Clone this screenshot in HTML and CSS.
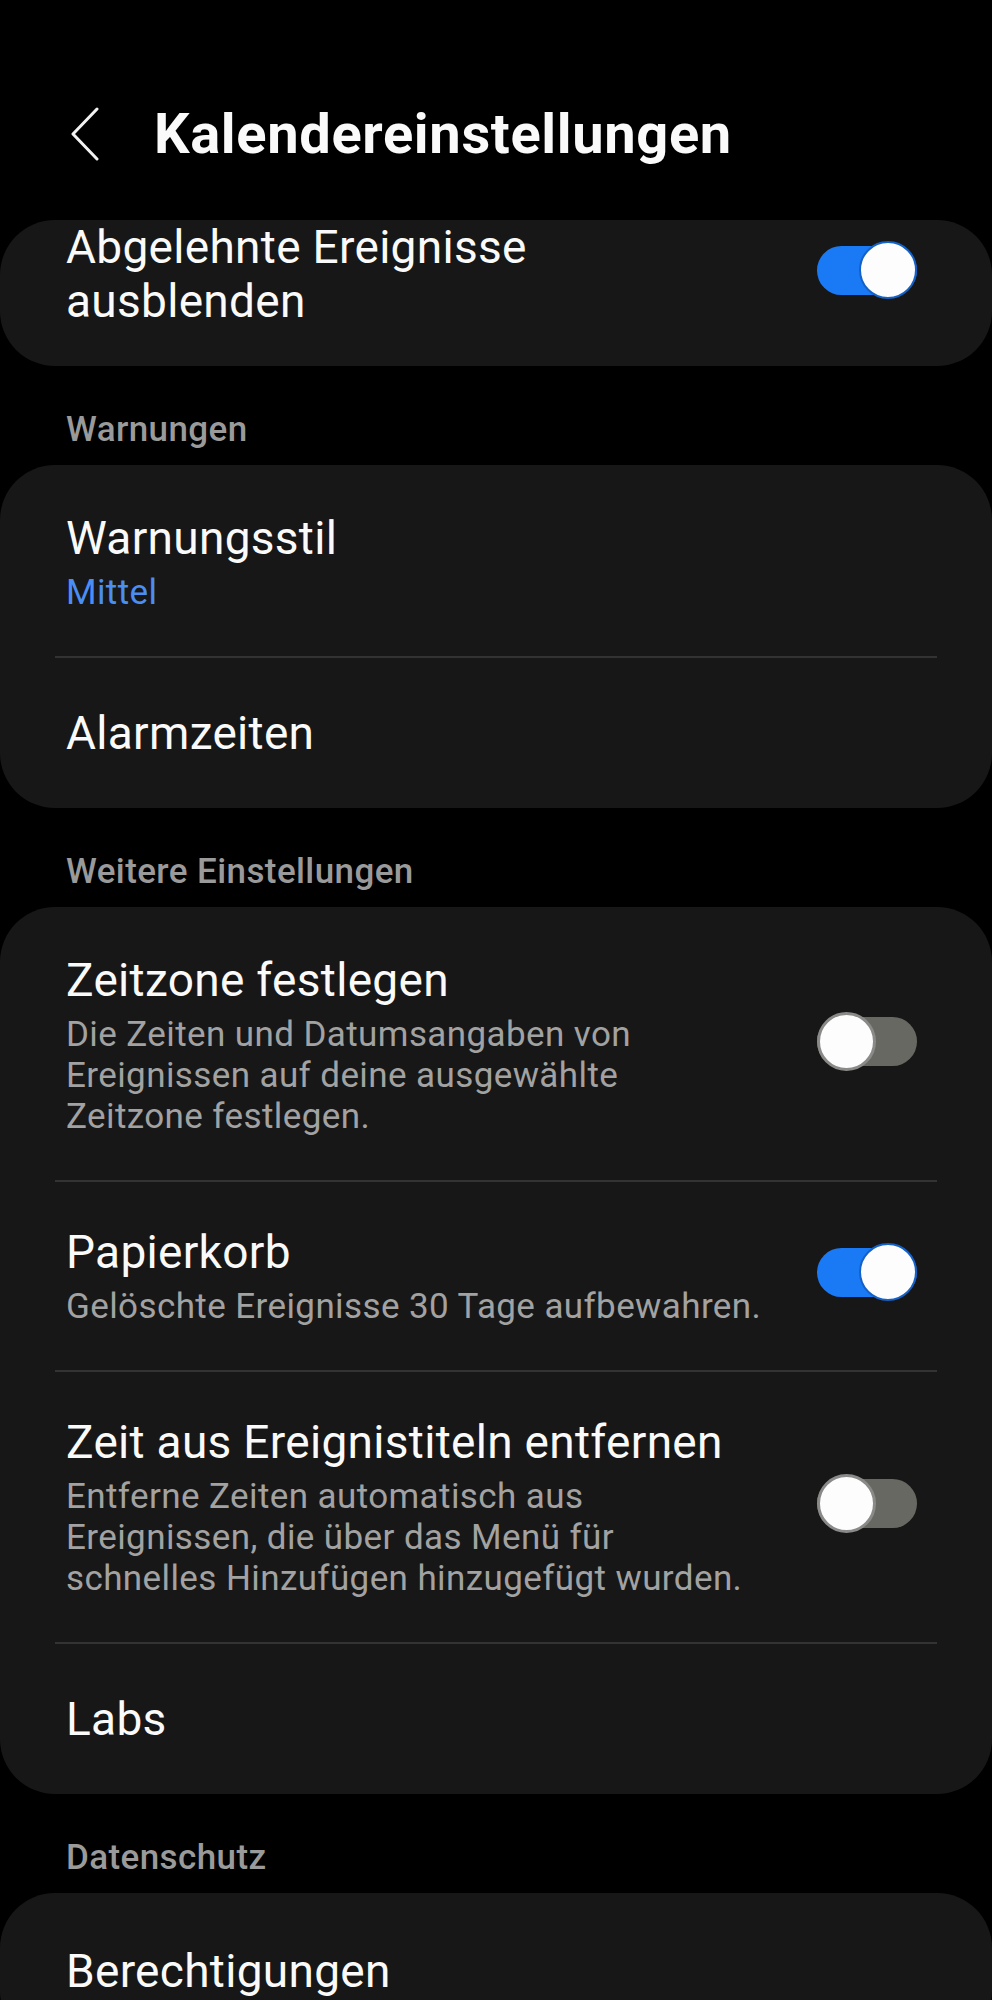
FILE: index.html
```html
<!DOCTYPE html>
<html lang="de">
<head>
<meta charset="utf-8">
<title>Kalendereinstellungen</title>
<link rel="stylesheet" href="styles.css">
</head>
<body>
<header class="appbar">
  <button class="back" aria-label="Zurück">
    <svg width="30" height="54" viewBox="0 0 30 54"><polyline points="27,2 3,27 27,52" fill="none" stroke="#f2f2f2" stroke-width="3" stroke-linecap="round" stroke-linejoin="round"/></svg>
  </button>
  <h1 class="title">Kalendereinstellungen</h1>
</header>

<main class="list">
  <section class="card card--scrolled">
    <div class="row row--clipped">
      <div class="text"><div class="label">Abgelehnte Ereignisse<br>ausblenden</div></div>
      <div class="switch switch--on"><span class="track"><span class="thumb"></span></span></div>
    </div>
  </section>

  <h2 class="section-title">Warnungen</h2>
  <section class="card">
    <div class="row">
      <div class="text"><div class="label">Warnungsstil</div><div class="sub sub--value">Mittel</div></div>
    </div>
    <div class="divider"></div>
    <div class="row">
      <div class="text"><div class="label">Alarmzeiten</div></div>
    </div>
  </section>

  <h2 class="section-title">Weitere Einstellungen</h2>
  <section class="card">
    <div class="row">
      <div class="text"><div class="label">Zeitzone festlegen</div><div class="sub">Die Zeiten und Datumsangaben von<br>Ereignissen auf deine ausgewählte<br>Zeitzone festlegen.</div></div>
      <div class="switch"><span class="track"><span class="thumb"></span></span></div>
    </div>
    <div class="divider"></div>
    <div class="row">
      <div class="text"><div class="label">Papierkorb</div><div class="sub">Gelöschte Ereignisse 30 Tage aufbewahren.</div></div>
      <div class="switch switch--on"><span class="track"><span class="thumb"></span></span></div>
    </div>
    <div class="divider"></div>
    <div class="row">
      <div class="text"><div class="label">Zeit aus Ereignistiteln entfernen</div><div class="sub">Entferne Zeiten automatisch aus<br>Ereignissen, die über das Menü für<br>schnelles Hinzufügen hinzugefügt wurden.</div></div>
      <div class="switch"><span class="track"><span class="thumb"></span></span></div>
    </div>
    <div class="divider"></div>
    <div class="row">
      <div class="text"><div class="label">Labs</div></div>
    </div>
  </section>

  <h2 class="section-title">Datenschutz</h2>
  <section class="card">
    <div class="row">
      <div class="text"><div class="label">Berechtigungen</div></div>
    </div>
  </section>
</main>
</body>
</html>
```

FILE: styles.css
```css
* {
  box-sizing: border-box;
  margin: 0;
  padding: 0;
}

html, body {
  background: #000;
}

body {
  width: 992px;
  font-family: Roboto, "Liberation Sans", sans-serif;
  color: #fafafa;
}

.appbar {
  display: flex;
  align-items: center;
  height: 220px;
  padding: 89px 0 41px 70px;
  gap: 54px;
}

.back {
  display: flex;
  width: 30px;
  height: 54px;
  background: none;
  border: 0;
}

.title {
  font-size: 56px;
  font-weight: 700;
  line-height: 90px;
  letter-spacing: 0.65px;
  color: #fafafa;
  white-space: nowrap;
}

.card {
  background: #171717;
  border-radius: 55px;
  padding-top: 3px;
  overflow: hidden;
}

.card--scrolled {
  padding-top: 0;
}

.row {
  display: flex;
  align-items: center;
  gap: 40px;
  min-height: 150px;
  padding: 43px 75px 43px 66px;
}

.row--clipped {
  min-height: 0;
  padding-top: 0;
  padding-bottom: 38px;
}

.text {
  flex: 1;
  min-width: 0;
}

.label {
  font-size: 46px;
  line-height: 54px;
  letter-spacing: 0.3px;
  color: #fafafa;
  white-space: nowrap;
}

.sub {
  margin-top: 7px;
  font-size: 35px;
  line-height: 41px;
  letter-spacing: 0.4px;
  color: #a2a2a2;
  white-space: nowrap;
}

.sub--value {
  color: #4b8ef3;
}

.divider {
  height: 2px;
  margin: 0 55px;
  background: #333;
}

.section-title {
  padding: 42px 66px 13px;
  font-size: 35px;
  font-weight: 500;
  line-height: 44px;
  letter-spacing: 0.4px;
  color: #9a9a9a;
}

.switch {
  flex: none;
  display: flex;
  align-items: center;
  width: 100px;
  height: 58px;
  margin-bottom: 8px;
}

.track {
  display: flex;
  align-items: center;
  justify-content: flex-start;
  width: 100px;
  height: 49px;
  border-radius: 25px;
  background: #686863;
}

.thumb {
  flex: none;
  width: 59px;
  height: 59px;
  border-radius: 50%;
  background: #fdfdfd;
  border: 3px solid #8a8a88;
}

.switch--on .track {
  justify-content: flex-end;
  background: #1a7af6;
}

.switch--on .thumb {
  width: 58px;
  height: 58px;
  border: 2px solid #1461c8;
}
```
